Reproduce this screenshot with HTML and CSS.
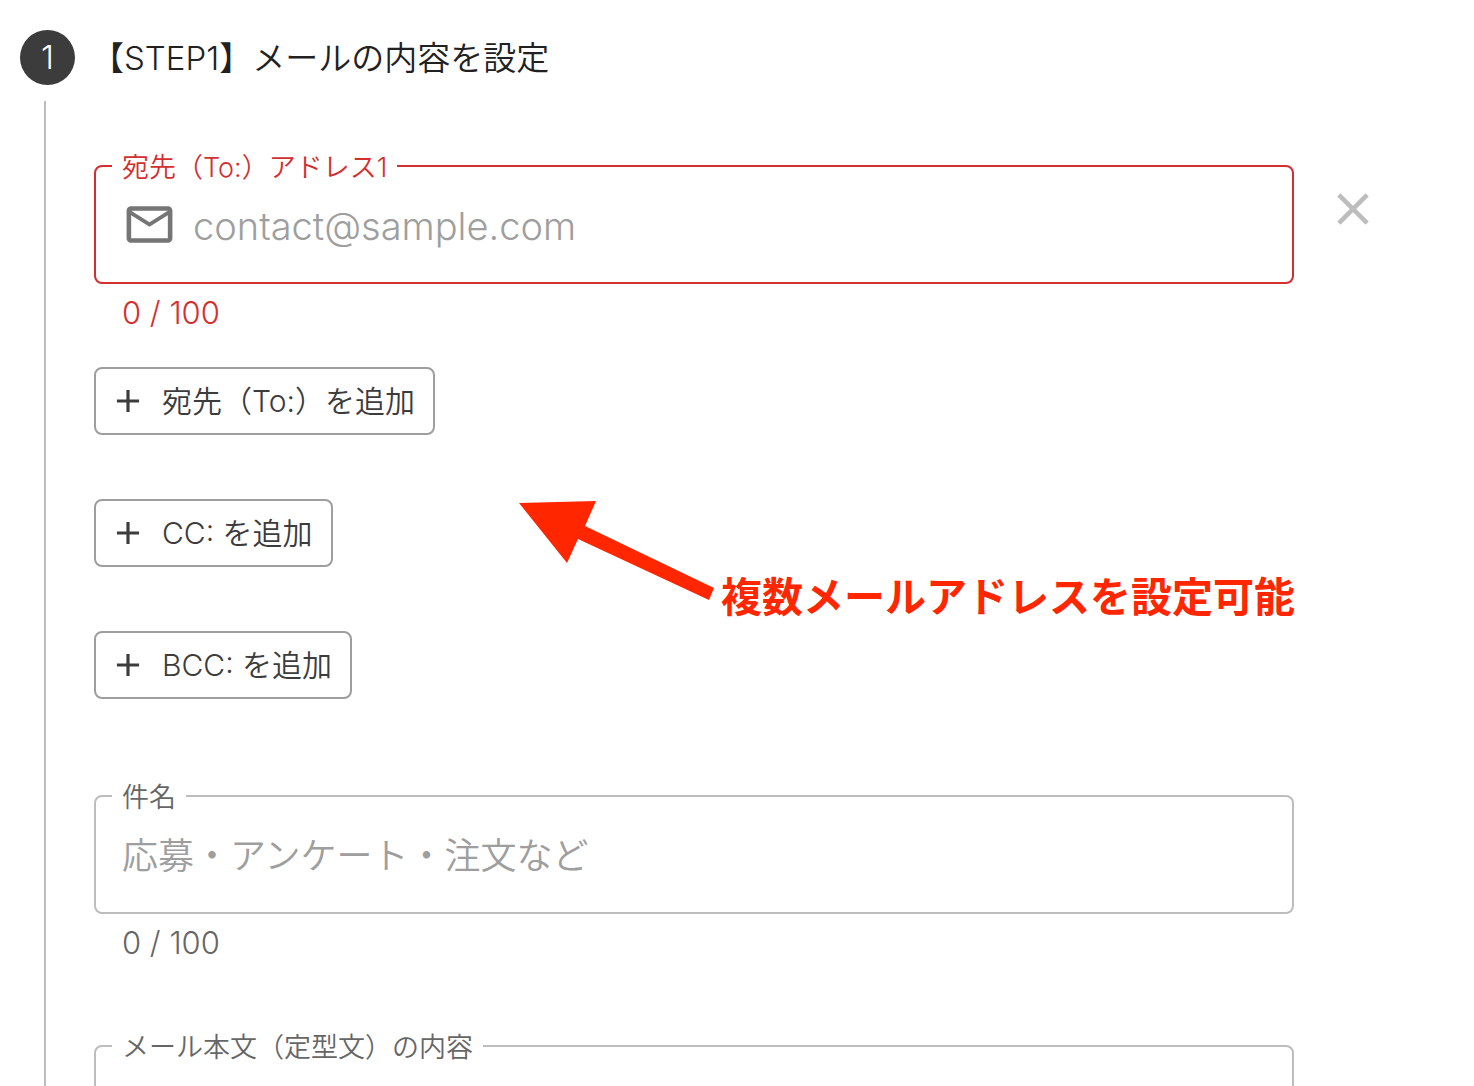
FILE: index.html
```html
<!DOCTYPE html>
<html lang="ja">
<head>
  <meta charset="UTF-8" />
  <meta name="viewport" content="width=device-width, initial-scale=1.0"/>
  <title>メールの内容を設定</title>
  <link rel="stylesheet" href="styles.css">
</head>
<body>
  <main class="stepper">
    <header class="step-header">
      <span class="step-number">1</span>
      <h1>【STEP1】メールの内容を設定</h1>
    </header>

    <form class="step-content">
      <div class="field-row">
        <div class="field field-error">
          <fieldset>
            <legend><label for="to1">宛先（To:）アドレス1</label></legend>
            <div class="input-row">
              <svg class="icon-mail" viewBox="0 0 24 24" aria-hidden="true">
                <path d="M22 6c0-1.100-.900-2-2-2H4c-1.100 0-2 .900-2 2v12c0 1.100.900 2 2 2h16c1.100 0 2-.900 2-2V6zm-2 0l-8 5-8-5h16zm0 12H4V8l8 5 8-5v10z"/>
              </svg>
              <input type="email" id="to1" maxlength="100" placeholder="contact@sample.com" />
            </div>
          </fieldset>
          <p class="counter">0 / 100</p>
        </div>
        <button type="button" class="btn-remove" aria-label="削除">
          <svg viewBox="0 0 24 24" aria-hidden="true">
            <path d="M19 6.410L17.590 5 12 10.590 6.410 5 5 6.410 10.590 12 5 17.590 6.410 19 12 13.410 17.590 19 19 17.590 13.410 12z"/>
          </svg>
        </button>
      </div>

      <div class="add-list">
        <button type="button" class="btn-add">
          <svg viewBox="0 0 24 24" aria-hidden="true"><path d="M19 13h-6v6h-2v-6H5v-2h6V5h2v6h6v2z"/></svg>
          <span>宛先（To:）を追加</span>
        </button>
        <button type="button" class="btn-add">
          <svg viewBox="0 0 24 24" aria-hidden="true"><path d="M19 13h-6v6h-2v-6H5v-2h6V5h2v6h6v2z"/></svg>
          <span>CC: を追加</span>
        </button>
        <button type="button" class="btn-add">
          <svg viewBox="0 0 24 24" aria-hidden="true"><path d="M19 13h-6v6h-2v-6H5v-2h6V5h2v6h6v2z"/></svg>
          <span>BCC: を追加</span>
        </button>

        <!-- callout over the buttons -->
        <div class="note">
          <svg viewBox="0 0 196 116" aria-hidden="true">
            <path d="M0 2L77 0 66 25 195 87 190 99 59 38 48 62z"/>
          </svg>
          <strong>複数メールアドレスを設定可能</strong>
        </div>
      </div>

      <div class="field-row">
        <div class="field">
          <fieldset>
            <legend><label for="subject">件名</label></legend>
            <div class="input-row">
              <input type="text" id="subject" maxlength="100" placeholder="応募・アンケート・注文など" />
            </div>
          </fieldset>
          <p class="counter">0 / 100</p>
        </div>
      </div>

      <div class="field-row">
        <div class="field">
          <fieldset>
            <legend><label for="bodyText">メール本文（定型文）の内容</label></legend>
            <div class="input-row">
              <textarea id="bodyText" rows="4"></textarea>
            </div>
          </fieldset>
        </div>
      </div>
    </form>
  </main>
</body>
</html>
```

FILE: styles.css
```css
:root {
  --text:       #212121;
  --dark:       #3c3c3c;
  --gray:       #666;
  --gray-light: #9e9e9e;
  --line:       #bdbdbd;
  --error:      #d32f2f;
  --note:       #ff2600;
}
* { box-sizing: border-box; margin: 0; padding: 0; }
body {
  background: #fff;
  color: var(--text);
  font-family: Inter, 'Noto Sans CJK JP', sans-serif;
  font-weight: 350;
}
input, textarea, button { font: inherit; }
svg { display: block; flex: none; fill: currentColor; }

.stepper {
  height: 100vh;
  padding: 30px 94px 0 20px;
  overflow-y: auto;
  scrollbar-width: none;
}
.step-header {
  display: flex;
  align-items: center;
  gap: 16px;
}
.step-number {
  width: 55px;
  height: 55px;
  border-radius: 50%;
  background: var(--dark);
  color: #fff;
  font-size: 33px;
  line-height: 55px;
  text-align: center;
}
h1 {
  font-size: 33px;
  font-weight: inherit;
  line-height: 48px;
}
.step-content {
  margin: 16px 0 0 24px;
  padding: 49px 0 60px 48px;
  border-left: 2px solid var(--line);
}

/* text fields */
.field-row {
  display: grid;
  grid-template-columns: 1fr 54px;
  gap: 32px;
}
.field { min-width: 0; color: var(--gray); }
fieldset {
  min-width: 0;
  padding: 0 26px 0 16px;
  border: 2px solid var(--line);
  border-radius: 8px;
}
legend {
  padding: 4px 10px 0;
  font-size: 27px;
  line-height: 28px;
}
.input-row {
  display: flex;
  align-items: center;
  gap: 16px;
  padding: 0 0 12px 10px;
}
.input-row input,
.input-row textarea {
  flex: 1;
  min-width: 0;
  border: none;
  outline: none;
  background: none;
  color: var(--text);
  font-size: 36px;
  resize: none;
}
.input-row input { height: 88px; }
.input-row input[type="email"] { font-size: 38px; }
::placeholder { color: var(--gray-light); opacity: 1; }
.icon-mail {
  width: 55px;
  height: 55px;
  margin-bottom: 4px;
  color: #757575;
}
.counter {
  padding: 8px 28px 0;
  font-size: 31px;
  line-height: 42px;
}
.field-error { color: var(--error); }
.field-error fieldset { border-color: var(--error); }

/* buttons */
.btn-remove {
  align-self: start;
  height: 54px;
  margin-top: 32px;
  border: none;
  background: none;
  color: var(--line);
  cursor: pointer;
}
.add-list {
  position: relative;
  display: flex;
  flex-direction: column;
  align-items: flex-start;
  gap: 64px;
  margin: 33px 0 81px;
}
.btn-add {
  display: flex;
  align-items: center;
  gap: 15px;
  height: 68px;
  padding: 0 18px 0 13px;
  border: 2px solid var(--gray-light);
  border-radius: 8px;
  background: #fff;
  color: var(--dark);
  font-size: 30px;
  cursor: pointer;
}
.btn-add svg { width: 38px; height: 38px; }
.btn-add span { padding-bottom: 4px; }
.field-row + .field-row { margin-top: 66px; }

/* callout */
.note {
  position: absolute;
  top: 134px;
  left: 425px;
  display: flex;
  align-items: flex-end;
  gap: 6px;
  color: var(--note);
  white-space: nowrap;
}
.note svg { width: 196px; height: 116px; }
.note strong {
  font-size: 41px;
  font-weight: 700;
  line-height: 40px;
}
```
